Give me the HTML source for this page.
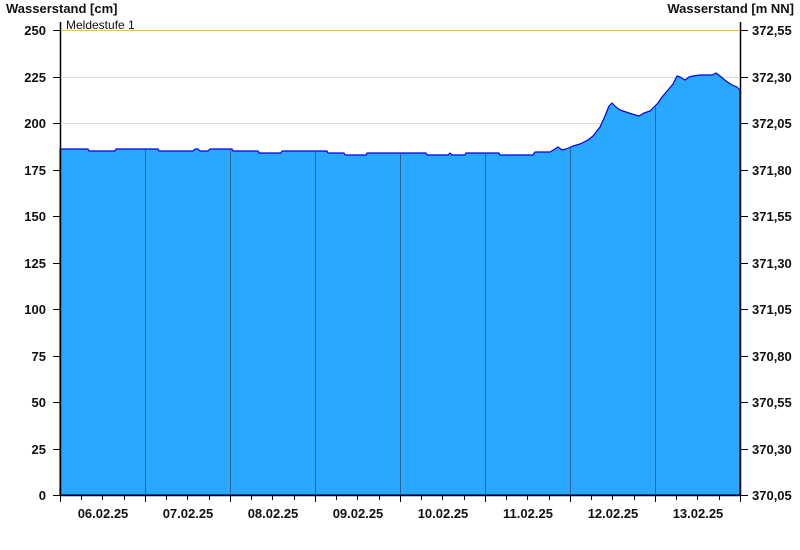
<!DOCTYPE html>
<html><head><meta charset="utf-8"><style>
html,body{margin:0;padding:0;background:#fff}
svg{display:block}
text{font-family:"Liberation Sans",Arial,sans-serif;font-weight:bold;font-size:13px;fill:#111}
</style></head><body>
<svg width="800" height="550" viewBox="0 0 800 550" xmlns="http://www.w3.org/2000/svg">
<g stroke="#dddddd" stroke-width="1">
<line x1="60" y1="77.5" x2="740" y2="77.5"/><line x1="60" y1="123.5" x2="740" y2="123.5"/>
<line x1="60" y1="170.5" x2="740" y2="170.5"/><line x1="60" y1="216.5" x2="740" y2="216.5"/>
<line x1="60" y1="263.5" x2="740" y2="263.5"/><line x1="60" y1="309.5" x2="740" y2="309.5"/>
<line x1="60" y1="356.5" x2="740" y2="356.5"/><line x1="60" y1="402.5" x2="740" y2="402.5"/>
<line x1="60" y1="449.5" x2="740" y2="449.5"/>
</g>
<line x1="60" y1="30.5" x2="740" y2="30.5" stroke="#f5c518" stroke-width="1"/>
<polygon fill="#29a8ff" stroke="#0000ee" stroke-width="1.2" stroke-linejoin="round" points="60,149 88,149 89,151 115,151 116,149 158,149 159,151 193,151 195,149 198,149 200,151 208,151 210,149 232,149 233,151 258,151 259,153 281,153 282,151 327,151 328,153 344,153 345,155 366,155 367,153 426,153 427,155 448,155 450,153 452,155 465,155 466,153 499,153 500,155 533,155 535,152 550,152 555,149 558,147 562,150 566,149 573,146 580,144 588,140 593,136 600,127 605,116 609,106 612,103 616,107 620,110 626,112 632,114 639,116 644,113 650,111 655,106 658,103 662,97 668,90 673,84 677,76 680,77 685,80 689,77 693,76 700,75 712,75 716,73 720,76 726,81 732,85 737,87 740,90 740,495 60,495"/>
<g stroke="#2a6690" stroke-width="1">
<line x1="145.5" y1="150" x2="145.5" y2="495"/><line x1="230.5" y1="150" x2="230.5" y2="495"/>
<line x1="315.5" y1="152" x2="315.5" y2="495"/><line x1="400.5" y1="154" x2="400.5" y2="495"/>
<line x1="485.5" y1="154" x2="485.5" y2="495"/><line x1="570.5" y1="148" x2="570.5" y2="495"/>
<line x1="655.5" y1="107" x2="655.5" y2="495"/>
</g>
<g stroke="#000" stroke-width="1.5">
<line x1="60.5" y1="22" x2="60.5" y2="495"/><line x1="740.5" y1="22" x2="740.5" y2="495"/>
<line x1="60" y1="495.5" x2="741" y2="495.5"/>
</g>
<g stroke="#000" stroke-width="1">
<path d="M53 30.5h7M53 77.5h7M53 123.5h7M53 170.5h7M53 216.5h7M53 263.5h7M53 309.5h7M53 356.5h7M53 402.5h7M53 449.5h7M53 495.5h7"/>
<path d="M741 30.5h7M741 77.5h7M741 123.5h7M741 170.5h7M741 216.5h7M741 263.5h7M741 309.5h7M741 356.5h7M741 402.5h7M741 449.5h7M741 495.5h7"/>
<path d="M60.5 495v7M145.5 495v7M230.5 495v7M315.5 495v7M400.5 495v7M485.5 495v7M570.5 495v7M655.5 495v7M740.5 495v7"/>
<path d="M81.5 495v5M102.5 495v5M124.5 495v5M166.5 495v5M187.5 495v5M209.5 495v5M251.5 495v5M272.5 495v5M294.5 495v5M336.5 495v5M357.5 495v5M379.5 495v5M421.5 495v5M442.5 495v5M464.5 495v5M506.5 495v5M527.5 495v5M549.5 495v5M591.5 495v5M612.5 495v5M634.5 495v5M676.5 495v5M697.5 495v5M719.5 495v5"/>
</g>
<text x="6" y="13">Wasserstand [cm]</text>
<text x="794" y="13" text-anchor="end">Wasserstand [m NN]</text>
<text x="66" y="29" style="font-weight:normal;font-size:12px">Meldestufe 1</text>
<g text-anchor="end">
<text x="46" y="35">250</text><text x="46" y="82">225</text><text x="46" y="128">200</text>
<text x="46" y="175">175</text><text x="46" y="221">150</text><text x="46" y="268">125</text>
<text x="46" y="314">100</text><text x="46" y="361">75</text><text x="46" y="407">50</text>
<text x="46" y="454">25</text><text x="46" y="500">0</text>
</g>
<g text-anchor="start">
<text x="752" y="35">372,55</text><text x="752" y="82">372,30</text><text x="752" y="128">372,05</text>
<text x="752" y="175">371,80</text><text x="752" y="221">371,55</text><text x="752" y="268">371,30</text>
<text x="752" y="314">371,05</text><text x="752" y="361">370,80</text><text x="752" y="407">370,55</text>
<text x="752" y="454">370,30</text><text x="752" y="500">370,05</text>
</g>
<g text-anchor="middle">
<text x="103" y="518">06.02.25</text><text x="188" y="518">07.02.25</text><text x="273" y="518">08.02.25</text>
<text x="358" y="518">09.02.25</text><text x="443" y="518">10.02.25</text><text x="528" y="518">11.02.25</text>
<text x="613" y="518">12.02.25</text><text x="698" y="518">13.02.25</text>
</g>
</svg>
</body></html>
